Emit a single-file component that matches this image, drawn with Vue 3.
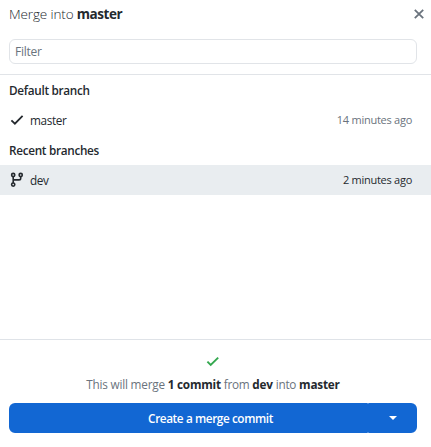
<script setup>
const groups = [
  { title: 'Default branch', branches: [{ name: 'master', time: '14 minutes ago', current: true }] },
  { title: 'Recent branches', branches: [{ name: 'dev', time: '2 minutes ago', selected: true }] },
]
</script>

<template>
  <div class="dialog">
    <header class="header">
      <h1 class="title"><span class="lead">Merge into</span> <strong>master</strong></h1>
      <button class="close" aria-label="Close">
        <svg width="10" height="10" viewBox="0 0 10 10"><path d="M.8.8l8.4 8.4M9.2.8L.8 9.2" fill="none" stroke="#6a737d" stroke-width="1.8" /></svg>
      </button>
    </header>
    <div class="filter"><input class="input" type="text" placeholder="Filter" /></div>
    <main class="list">
      <section v-for="g in groups" :key="g.title">
        <h2 class="group">{{ g.title }}</h2>
        <div v-for="b in g.branches" :key="b.name" class="row" :class="{ selected: b.selected }">
          <svg v-if="b.current" class="icon" width="14" height="16" viewBox="0 0 14 16"><path d="M1.4 8.3l3.5 3.4 7.7-7.8" fill="none" stroke="#24292e" stroke-width="1.8" /></svg>
          <svg v-else class="icon" width="14" height="16" viewBox="0 0 14 16" fill="none" stroke="#24292e" stroke-width="1.6">
            <circle cx="3.2" cy="3" r="1.6" /><circle cx="3.2" cy="12.6" r="1.6" /><circle cx="10.7" cy="3" r="1.6" />
            <path d="M3.2 4.6v6.4M10.7 4.6v1.6q0 1.7-1.7 1.7H3.2" />
          </svg>
          <span class="name">{{ b.name }}</span>
          <time class="time">{{ b.time }}</time>
        </div>
      </section>
    </main>
    <footer class="footer">
      <svg class="ok" width="14" height="12" viewBox="0 0 14 12"><path d="M1.4 5.7l3.3 3.3 7.5-7.4" fill="none" stroke="#34a84f" stroke-width="1.9" /></svg>
      <p class="status">This will merge <strong>1 commit</strong> from <strong>dev</strong> into <strong>master</strong></p>
      <div class="actions">
        <button class="merge">Create a merge commit</button>
        <button class="more" aria-label="Merge options"><svg width="8" height="4" viewBox="0 0 8 4"><path d="M0 0h8L4 4z" fill="#fff" /></svg></button>
      </div>
    </footer>
  </div>
</template>

<style>
body { margin: 0; background: #fff; }
</style>

<style scoped>
.dialog {
  box-sizing: border-box;
  height: 447px;
  display: flex;
  flex-direction: column;
  font-family: "Open Sans", "Noto Sans", sans-serif;
  font-size: 12px;
  color: #24292e;
}
button { border: 0; padding: 0; background: none; font: inherit; }
.header { height: 39px; display: flex; align-items: flex-start; justify-content: space-between; padding: 0 7px 0 9px; box-sizing: border-box; }
.title { margin: 4px 0 0; font-size: 13.5px; line-height: 20px; font-weight: 400; letter-spacing: -0.3px; }
.title .lead { font-weight: 300; letter-spacing: -0.13px; }
.title strong { font-weight: 700; letter-spacing: -0.4px; }
.close { width: 10px; height: 10px; margin-top: 9px; display: flex; }
.filter { height: 36px; box-sizing: border-box; padding: 0 14px 0 9px; border-bottom: 1px solid #e1e4e8; }
.input {
  display: block; width: 100%; height: 25px; box-sizing: border-box; padding: 0 5px;
  border: 1px solid #e1e4e8; border-radius: 6px; background: #fff; font: inherit; letter-spacing: -0.25px; outline: 0;
}
.input::placeholder { color: #6a737d; opacity: 1; }
.list { flex: 1; }
.group { margin: 0; height: 30px; padding: 0 9px; box-sizing: border-box; font-size: 11.75px; font-weight: 600; line-height: 30px; letter-spacing: -0.3px; }
.row { height: 30px; display: flex; align-items: center; padding: 0 19px 0 10px; box-sizing: border-box; }
.row.selected { background: #e9edf0; }
.icon { flex: none; margin-right: 6px; }
.name { flex: 1; font-size: 11.75px; line-height: 16px; padding-bottom: 1px; letter-spacing: -0.35px; }
.time { font-size: 11px; line-height: 16px; color: #6a737d; letter-spacing: -0.26px; }
.selected .time { color: #24292e; }
.footer { height: 108px; box-sizing: border-box; border-top: 1px solid #dfe3e8; display: flex; flex-direction: column; align-items: center; padding: 16px 14px 14px 9px; }
.ok { flex: none; }
.status { margin: 6px 0 9px; font-size: 11.75px; line-height: 20px; color: #6a737d; letter-spacing: -0.21px; white-space: nowrap; }
.status strong { color: #24292e; font-weight: 700; }
.actions { width: 100%; height: 30px; flex: none; display: flex; color: #fff; }
.merge { flex: 1; padding: 0 0 1px 44px; border-radius: 6px 1px 1px 6px; background: #1267d3; color: #fff; font-size: 11.75px; font-weight: 600; letter-spacing: -0.4px; }
.more { width: 49px; border-radius: 1px 6px 6px 1px; background: #1267d3; display: flex; align-items: center; justify-content: center; }
</style>
